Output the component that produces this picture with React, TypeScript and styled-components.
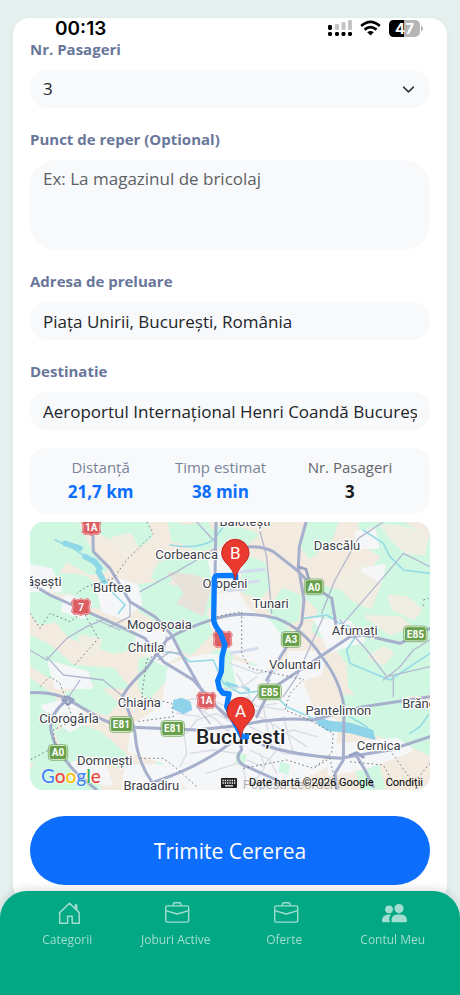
import React from "react";
import styled, { createGlobalStyle } from "styled-components";

const GlobalStyle = createGlobalStyle`
  *, *::before, *::after { box-sizing: border-box; }
  html { background: #e6f1ef; }
  body { margin: 0; background: #e6f1ef; color: #212529; font-family: "Open Sans", "Noto Sans", sans-serif; }
  button, input, select, textarea { font-family: inherit; }
`;

const Page = styled.div`
  min-height: 100vh;
  padding: 18px 13px 93px;
`;

const Card = styled.main`
  padding: 0 17px 17px;
  border-radius: 17px;
  background: #fff;
  box-shadow: 0 2px 10px rgba(0, 40, 40, 0.05);
`;

const StatusBar = styled.header`
  display: flex;
  align-items: flex-start;
  justify-content: space-between;
  height: 20px;
  padding: 1px 7px 0 25px;
`;

const Clock = styled.time`
  font: 600 19px/20px Inter, sans-serif;
  color: #000;
`;

const StatusIcons = styled.div`
  display: flex;
  align-items: center;
  gap: 8px;
`;

const Form = styled.form`
  display: flex;
  flex-direction: column;
`;

const Field = styled.div`
  display: flex;
  flex-direction: column;
  gap: 10px;
  margin-bottom: 20px;
`;

const Label = styled.label`
  font-size: 15px;
  line-height: 22px;
  font-weight: 700;
  color: #68769a;
`;

const controlStyle = `
  display: block;
  width: 100%;
  margin: 0;
  border: 0;
  outline: 0;
  border-radius: 17px;
  background: #f8f9fb;
  color: #212529;
  font-size: 17px;
  line-height: 26px;
  padding: 6px 13px;
`;

const TextInput = styled.input`
  ${controlStyle}
  height: 38px;
`;

const TextArea = styled.textarea`
  ${controlStyle}
  height: 90px;
  border-radius: 26px;
  resize: none;
  &::placeholder { color: #5c6064; opacity: 1; }
`;

const SelectBox = styled.div`
  position: relative;
  svg { position: absolute; right: 15px; top: 13px; pointer-events: none; }
`;

const Select = styled.select`
  ${controlStyle}
  height: 38px;
  appearance: none;
`;

const Summary = styled.dl`
  display: flex;
  justify-content: space-around;
  margin: -2px 0 8px;
  padding: 7px 17px 9px;
  border-radius: 17px;
  background: #f8f9fa;
  text-align: center;
`;

const Term = styled.dt<{ $muted?: boolean }>`
  font-size: 15px;
  line-height: 24px;
  color: ${(p) => (p.$muted ? "#7a849c" : "#62666c")};
`;

const Value = styled.dd<{ $accent?: boolean }>`
  margin: 0;
  font-size: 17px;
  line-height: 26px;
  font-weight: 700;
  color: ${(p) => (p.$accent ? "#0d6efd" : "#16181b")};
`;

const MapFrame = styled.section`
  position: relative;
  overflow: hidden;
  border-radius: 14px;
  background: #f3efe9;
  > svg { display: block; width: 100%; height: auto; }
`;

const MapFooter = styled.div`
  position: absolute;
  left: 11px;
  right: 7px;
  bottom: 0;
  display: flex;
  align-items: flex-end;
  justify-content: space-between;
`;

const Logo = styled.span`
  font: 500 19px/28px Lato, sans-serif;
  text-shadow: 0 0 2px #fff, 0 0 2px #fff;
`;

const Letter = styled.span<{ $c: string }>`
  color: ${(p) => p.$c};
`;

const Credits = styled.div`
  display: flex;
  align-items: center;
  gap: 12px;
  height: 14px;
  font: 11px/14px Roboto, sans-serif;
  color: #000;
  a { color: inherit; text-decoration: none; }
`;

const Submit = styled.button`
  height: 69px;
  margin-top: 26px;
  border: 0;
  border-radius: 35px;
  background: #0d6efd;
  color: #fff;
  font-size: 21px;
  line-height: 32px;
`;

const TabBar = styled.nav`
  position: fixed;
  left: 0;
  right: 0;
  bottom: 0;
  display: flex;
  height: 104px;
  padding: 10px 13px 0;
  border-radius: 27px 27px 0 0;
  background: #02a884;
  box-shadow: 0 -2px 10px rgba(0, 0, 0, 0.13);
`;

const Tab = styled.a`
  flex: 1;
  display: flex;
  flex-direction: column;
  align-items: center;
  gap: 5px;
  color: #a1ddd0;
  font-size: 12px;
  line-height: 18px;
  text-decoration: none;
  svg { margin-left: 4px; }
`;

const HouseIcon = () => (
  <svg width="25" height="25" viewBox="1 0 25 25" fill="none" stroke="currentColor" strokeWidth="1.5" strokeLinejoin="round" aria-hidden="true">
    <path d="M3.7 22.2V11.6L13.500 2.200l9.700 9.400v10.600h-7v-7h-4.600v7z" />
    <path d="M18.6 3.2h2.8v6.800l-2.800-2.800z" fill="currentColor" stroke="none" />
  </svg>
);

const BriefcaseIcon = () => (
  <svg width="25" height="25" viewBox="1 0 25 25" fill="none" stroke="currentColor" strokeWidth="1.4" strokeLinejoin="round" aria-hidden="true">
    <rect x="1.7" y="4.9" width="23" height="16.2" rx="1.6" />
    <path d="M9.4 4.9V3.2q0-1.4 1.4-1.4h4.8q1.4 0 1.4 1.4v1.7M1.7 9.6l11.5 3.4 11.5-3.4" />
  </svg>
);

const PeopleIcon = () => (
  <svg width="25" height="25" viewBox="0 0 25 25" fill="currentColor" aria-hidden="true">
    <circle cx="17" cy="7.6" r="4.6" />
    <circle cx="7" cy="8.3" r="3.9" />
    <path d="M10.9 21.3q-1.5 0-1.5-1.7 0-6.3 7.8-6.3t7.8 6.3q0 1.7-1.5 1.7zM8 21.3H1.4Q0 21.3 0 19.8c0-4.6 3.4-7 9.2-6.2Q6.400 16.300 7.600 20z" />
  </svg>
);

const SignalIcon = () => (
  <svg width="24" height="18" viewBox="0 0 24 18" aria-hidden="true">
    <g fill="#c4c4c4">
      <rect x="7" y="5" width="4" height="6" rx="1" />
      <rect x="13.500" y="3" width="4" height="8" rx="1" />
      <rect x="20" y="1" width="4" height="10" rx="1" />
    </g>
    <rect x="0" y="6" width="4" height="5" rx="1.400" />
    {[0, 7, 13.5, 20].map((x) => (
      <rect key={x} x={x} y="13" width="4" height="4" rx="1.400" />
    ))}
  </svg>
);

const WifiIcon = () => (
  <svg width="21" height="16" viewBox="0 0 21 16" fill="none" stroke="#000" strokeWidth="2.700" aria-hidden="true">
    <path d="M1.200 6Q10.500-2.300 19.800 6M4.500 9.600q6-5 12 0" />
    <path d="M7.200 12.200q3.300-2.600 6.600 0l-3.300 3.400z" fill="#000" stroke="none" />
  </svg>
);

const BatteryIcon = () => (
  <svg width="34" height="17" viewBox="0 0 34 17" aria-hidden="true">
    <rect x="0" y="0" width="31" height="17" rx="5" fill="#b5b5b5" />
    <path d="M15 0H5Q0 0 0 5v7q0 5 5 5h10z" />
    <path d="M32 5.500q2 .6 2 3t-2 3z" fill="#b5b5b5" />
    <text x="15.500" y="14" textAnchor="middle" fontFamily="Inter, sans-serif" fontWeight="700" fontSize="15" fill="#fff">47</text>
  </svg>
);

const greens = [
  "M0 6H140L168 70 190 110 225 150 180 160 110 118 85 150 60 190 30 195 0 170z",
  "M210 6H350L362 50 330 75 300 40 250 55 205 35z",
  "M90 165L160 170 200 200 230 265 180 255 120 215 80 215z",
  "M0 205L60 225 130 265 190 285 260 315 315 350 300 385 250 395 180 370 120 350 80 300 30 310 0 270z",
  "M420 10L470 20 530 10 550 40 545 80 500 90 470 70 430 60z",
  "M460 110L550 118 548 175 500 160 440 160 400 200 370 170 390 130z",
  "M300 200L400 190 430 240 530 290 540 340 480 400 420 370 400 310 330 270z",
  "M385 195L450 205 470 260 540 260 545 220 520 290 430 270z",
  "M560 20L640 30 680 45 650 70 600 45 560 80z",
  "M570 275L630 280 640 350 600 340z M640 330L740 290 780 340 740 370 660 390z",
  "M990 6H1110L1200 60V520L1100 525 1060 560 1000 540 960 500 955 430 920 380 850 330 870 270 830 230 850 195 920 215 1000 180 1060 110 1000 70z",
  "M830 6H920L900 60 840 110 820 85z",
  "M640 110L700 130 715 200 690 230 640 215z",
  "M760 210L810 230 800 300 760 310 720 270z",
  "M0 350L60 380 130 440 250 450 290 500 220 500 160 470 60 470 0 430z",
  "M0 480L70 530 90 590 60 650 80 710 40 740 0 720z",
  "M110 520L200 500 260 550 230 580 160 560z",
  "M80 640L130 610 210 640 290 710 270 740 180 700 120 720z",
  "M940 530L1110 530 1200 570V700L1110 660 1030 640 940 600z",
  "M330 420L400 410 420 460 350 540 330 500z",
  "M550 400L600 390 620 500 590 520 560 460z",
  "M660 410L690 400 700 460 670 470z",
  "M20 730L100 700 180 760 210 810H0V760z",
  "M380 710L440 705 470 760 430 790 390 760z",
  "M970 710L1040 730 1060 800 1000 810z",
  "M620 700L655 710 640 740 615 730z M750 725L780 735 775 765 745 755z",
];

const sands = [
  "M1060 20Q1120 15 1190 50L1180 100 1130 95 1090 60z",
  "M920 190L1000 130 1050 190 1020 260 970 240z",
  "M1080 230L1130 235 1170 270 1150 295 1090 265z",
  "M1010 290L1110 295 1140 320 1080 340z",
  "M1020 410L1060 385 1085 400 1060 430z",
  "M150 350L210 360 200 400 160 390z",
  "M250 55L300 45 320 80 290 110z",
];

const urban = [
  "M420 440Q520 400 560 410L650 440 720 450 810 480 840 560 920 610 910 690 880 740 780 790 640 810 480 810 420 730 300 690 310 620 400 560z",
  "M560 230L620 220 650 270 720 310 770 380 710 440 600 390 545 310z",
  "M260 180L320 200 330 250 280 290 220 270 210 220z",
  "M320 340L420 340 450 400 400 430 330 390z",
  "M600 80L640 100 620 190 560 210 540 120z",
  "M860 300L960 310 1000 360 900 390z",
  "M780 400L880 400 870 460 740 500z",
  "M980 40L1030 30 1040 80 990 80z M1000 150L1060 140 1050 180z",
  "M60 430L170 460 180 500 80 500z M40 560L120 540 170 600 120 630z",
  "M290 740L440 740 450 810 280 810z M130 730L220 730 240 790 130 770z",
  "M900 680L1100 660 1140 690 1010 740 900 760z",
  "M0 140L60 150 90 210 0 210z M110 230L180 250 160 290 100 270z",
];

const highways = [
  "M188 6L190 95 240 145 300 245 375 290 425 345 455 405 520 520 590 590",
  "M0 190L60 225 160 270 250 310 345 355 400 425 490 480 560 560 600 595",
  "M558 6L555 170 552 300",
  "M828 6L808 80 805 140 822 240 815 310 745 420 710 480",
  "M655 80Q700 80 730 95L800 150 850 200 905 235 918 315",
  "M278 530Q290 500 350 445L410 360Q460 325 560 295 640 270 740 295 820 325 875 410 930 480 942 560L940 720 915 760 920 810",
  "M278 530Q305 590 315 640 320 720 365 785L375 810",
  "M0 518Q80 515 125 545L220 600 270 620 500 630 640 615Q740 590 850 600L1000 560 1200 530",
  "M110 540Q50 590 65 640 75 690 140 760L200 810",
  "M1200 325L1110 370 1000 345 960 350 870 410 720 510 680 590",
  "M375 785Q510 740 600 670",
  "M630 660L635 690Q610 715 640 735L740 780",
  "M700 675Q790 705 930 715L1080 690 1200 650",
  "M975 700L1005 750 1030 800",
];

const roads = [
  "M555 85L500 120 440 155 330 215",
  "M0 390L50 420 110 355 170 320 230 295",
  "M50 410L100 465 220 480 280 530",
  "M690 35L710 110 725 280",
  "M880 290L800 470 760 530 M875 280L915 180 985 55 1060 6",
  "M940 310L1070 160 1120 100 1200 140",
  "M930 300L1010 390 1070 470 1200 440",
  "M1060 480L1110 440 1150 390 1200 360",
  "M1090 470L1090 530",
  "M110 540L150 480 M300 240L300 290 240 320",
  "M455 405L420 395 385 420 M410 350L400 400",
  "M640 590L670 540 720 480 M500 560L540 610",
  "M500 6L550 60 M200 300L270 330",
];

const streets = [
  "M470 640L500 600 560 580 610 610 580 655 M500 560L560 600 600 640 M520 530L590 560 650 550 690 580",
  "M640 600L700 560 760 570 M660 620L720 650 790 630 860 650 M670 580L740 620 830 680",
  "M650 530L680 560 740 550 M690 650L760 700 820 705 M660 690L720 720 740 760",
  "M480 700L550 690 620 700 M500 730L570 690 M530 760L620 730 690 760",
  "M620 460L660 530 630 590 M720 600L750 680 M760 590L790 700 M700 560L715 640",
  "M470 540L540 530 M440 580L510 590 M460 620L470 700 450 740",
  "M640 740L650 800 M690 700L705 740 670 790 M740 690L700 740 650 720",
  "M560 510L640 500 680 470 M600 430L680 460 740 450",
];

const borders = [
  "M350 6L370 40 290 120 250 175 170 200 140 220",
  "M0 280L30 325 60 280 120 305 160 275 205 355 130 440",
  "M560 290L635 275 635 400 660 445 820 478 780 520 765 570 840 600 910 640 905 700 850 745",
  "M400 390L350 420 335 530 425 550 430 590 320 605",
  "M30 500L60 470 90 490 130 600 70 630 75 680 0 720",
  "M330 715L400 715 440 745 500 800",
  "M640 745L770 720 850 745 900 715 920 810",
  "M960 725L1060 735 1090 790 M1080 690L1150 790 1200 730",
  "M1180 240L1195 235M1178 255L1190 260",
];

const waterLines = [
  "M75 60L130 85 180 120 215 160 240 210 285 255 265 280",
  "M420 75Q500 90 550 60L580 20",
  "M390 395L450 400 480 425 550 420 580 490 630 520 720 510 770 560 860 600 1035 655 1010 620 960 590",
  "M1000 30L1060 70 1080 110 1120 150 1200 160",
  "M820 295L890 285 930 310 990 330 950 390 960 430 1030 460 1080 480 1200 400",
  "M1195 585L1170 620 1140 640",
];

type MapLabel = [string, number, number];
const towns: MapLabel[] = [
  ["Balotești", 645, 18], ["Corbeanca", 470, 116], ["Dascălu", 921, 90], ["ășești", 43, 199],
  ["Buftea", 246, 215], ["Otopeni", 585, 203], ["Tunari", 722, 263], ["Mogoșoaia", 388, 328],
  ["Afumați", 974, 346], ["Chitila", 348, 395], ["Voluntari", 795, 446], ["Chiajna", 328, 560],
  ["Pantelimon", 925, 586], ["Brănești", 1188, 563], ["Ciorogârla", 117, 608], ["Cernica", 1046, 689],
  ["Domnești", 224, 734], ["Bragadiru", 364, 810],
];

const shields: MapLabel[] = [
  ["A0", 852, 201], ["A3", 783, 359], ["E85", 1156, 342], ["E85", 719, 516],
  ["E81", 274, 614], ["E81", 428, 626], ["A0", 84, 698],
];

const redShields: MapLabel[] = [["1A", 184, 20], ["7", 153, 260], ["", 578, 358], ["1A", 529, 541]];

const Pin = ({ letter, x, y }: { letter: string; x: number; y: number }) => (
  <g transform={`translate(${x} ${y})`}>
    <path d="M0 0C-5-45-41-49-41-81A41 41 0 0 1 41-81C41-49 5-45 0 0z" fill="#ea3a30" stroke="#c5221f" strokeWidth="3" />
    <text y="-62" textAnchor="middle" fontFamily="Roboto, sans-serif" fontSize="51" fill="#fff">{letter}</text>
  </g>
);

const RouteMap = () => (
  <svg viewBox="0 6 1200 804" role="img" aria-label="Traseu">
    <rect y="6" width="1200" height="804" fill="#f3ebe0" />
    <g strokeLinejoin="round">
      <path d={greens.join("")} fill="#cff7e1" stroke="#cff7e1" strokeWidth="12" />
      <path d={sands.join("")} fill="#f0eee2" stroke="#f0eee2" strokeWidth="12" />
      <path d="M410 155L500 165 545 200 520 290 440 250 460 220z" fill="#e7e2da" />
      <path d={urban.join("")} fill="#f5f6f8" stroke="#f5f6f8" strokeWidth="14" />
      <path d="M575 400L600 390 620 510 590 520 570 480z M620 695L650 705 640 740 615 730z M750 725L780 735 775 765 745 755z" fill="#cff7e1" />
    </g>
    <g fill="none" stroke="#d4dbee" strokeWidth="9">
      <path d="M610 158L705 148M590 193L690 183M590 212L650 206M600 400L685 385" />
    </g>
    <g fill="none" strokeLinejoin="round" strokeLinecap="round">
      <path d={waterLines.join("")} stroke="#97dbe6" strokeWidth="5" />
      <path d="M105 70L150 85M165 110L195 125 210 145M205 155L225 190" stroke="#8fd8e8" strokeWidth="17" />
      <path d="M590 490L620 500M640 500L655 510M700 505L720 515" stroke="#8fd8e8" strokeWidth="10" />
      <path d={streets.join("")} stroke="#d9dce6" strokeWidth="4" />
    </g>
    <path d="M430 540L455 533 482 545 487 570 460 583 427 566zM855 588L900 602 960 608 1030 630 1035 660 960 640 890 632 860 610z" fill="#8fd3ea" />
    <g fill="none" strokeLinejoin="round" strokeLinecap="round">
      <path d={roads.join("")} stroke="#b3b9d0" strokeWidth="4" />
      <path d={highways.join("")} stroke="#a6afcb" strokeWidth="9" />
      <path d="M98 540L112 530 130 540 114 554zM805 140L828 148 840 190M960 706L980 698 1000 712" stroke="#98a2c3" strokeWidth="8" />
      <path d={borders.join("")} stroke="#777b82" strokeWidth="3" strokeDasharray="5 8" strokeLinecap="butt" />
    </g>
    <g fontFamily="Roboto, sans-serif" fontSize="39" textAnchor="middle" fill="#3c4048" stroke="#fff" strokeWidth="7" strokeLinejoin="round" paintOrder="stroke">
      {towns.map(([name, x, y]) => (
        <text key={name} x={x} y={y}>{name}</text>
      ))}
      <text x="632" y="672" fontSize="63" fontWeight="500" fill="#202124">București</text>
      <text x="785" y="808" opacity="0.35">Popești-Leordeni</text>
    </g>
    <g fontFamily="Roboto, sans-serif" fontSize="30" fontWeight="700" textAnchor="middle" fill="#fff">
      {shields.map(([name, x, y]) => {
        const w = name.length > 2 ? 66 : 54;
        return (
          <g key={`${name}-${x}`}>
            <rect x={x - w / 2} y={y - 22} width={w} height="43" rx="8" fill="#689f4a" stroke="#f3fbef" strokeWidth="3" />
            <rect x={x - w / 2 - 2} y={y - 24} width={w + 4} height="47" rx="10" fill="none" stroke="#5f9543" strokeWidth="2" />
            <text x={x} y={y + 11}>{name}</text>
          </g>
        );
      })}
      {redShields.map(([name, x, y]) => (
        <g key={`${name}-${x}`}>
          <path transform={`translate(${x} ${y})`} d="M-20-23Q-10-17 0-23 10-17 20-23L27-14Q21 0 26 15L18 22Q8 20 0 25-8 20-18 22L-26 15Q-21 0-27-14z" fill="#dc5d62" stroke="#dc5d62" strokeWidth="6" strokeLinejoin="round" />
          <path transform={`translate(${x} ${y})`} d="M-20-23Q-10-17 0-23 10-17 20-23L27-14Q21 0 26 15L18 22Q8 20 0 25-8 20-18 22L-26 15Q-21 0-27-14z" fill="none" stroke="#fbdcdc" strokeWidth="2" />
          <text x={x} y={y + 12}>{name}</text>
        </g>
      ))}
    </g>
    <path d="M617 180V166L562 167Q554 168 553 178L551 300Q554 318 570 336L585 375 576 410 574 455 563 482 568 505 578 519 597 522 590 560 610 600 636 650 657 650" fill="none" stroke="#087cff" strokeWidth="16" strokeLinejoin="round" />
    <Pin letter="B" x={616} y={180} />
    <Pin letter="A" x={632} y={654} />
  </svg>
);

const KeyboardIcon = () => (
  <svg width="16" height="10" viewBox="0 0 16 10" aria-hidden="true">
    <rect width="16" height="10" rx="1" fill="#222" />
    <path d="M1.500 2.500h13M1.500 5h13" stroke="#fff" strokeWidth="1.300" strokeDasharray="1.300 1" />
    <path d="M4 7.800h8" stroke="#fff" strokeWidth="1.200" />
  </svg>
);

const logoLetters = [
  ["G", "#4285f4"], ["o", "#ea4335"], ["o", "#fbbc05"], ["g", "#4285f4"], ["l", "#34a853"], ["e", "#ea4335"],
];

const tabs = [
  { name: "Categorii", Icon: HouseIcon },
  { name: "Joburi Active", Icon: BriefcaseIcon },
  { name: "Oferte", Icon: BriefcaseIcon },
  { name: "Contul Meu", Icon: PeopleIcon },
];

export default function App() {
  return (
    <>
      <GlobalStyle />
      <Page>
        <Card>
          <StatusBar>
            <Clock>00:13</Clock>
            <StatusIcons>
              <SignalIcon />
              <WifiIcon />
              <BatteryIcon />
            </StatusIcons>
          </StatusBar>
          <Form onSubmit={(e) => e.preventDefault()}>
            <Field>
              <Label htmlFor="passengers">Nr. Pasageri</Label>
              <SelectBox>
                <Select id="passengers" defaultValue="3">
                  {[1, 2, 3, 4].map((n) => (
                    <option key={n} value={n}>{n}</option>
                  ))}
                </Select>
                <svg width="13" height="13" viewBox="0 0 16 16" fill="none" stroke="#343a40" strokeWidth="2" strokeLinecap="round" strokeLinejoin="round" aria-hidden="true">
                  <path d="m2 5 6 6 6-6" />
                </svg>
              </SelectBox>
            </Field>
            <Field>
              <Label htmlFor="landmark">Punct de reper (Optional)</Label>
              <TextArea id="landmark" placeholder="Ex: La magazinul de bricolaj" />
            </Field>
            <Field>
              <Label htmlFor="pickup">Adresa de preluare</Label>
              <TextInput id="pickup" defaultValue="Piața Unirii, București, România" />
            </Field>
            <Field>
              <Label htmlFor="destination">Destinatie</Label>
              <TextInput id="destination" defaultValue="Aeroportul Internațional Henri Coandă București" />
            </Field>
            <Summary>
              <div>
                <Term $muted>Distanță</Term>
                <Value $accent>21,7 km</Value>
              </div>
              <div>
                <Term $muted>Timp estimat</Term>
                <Value $accent>38 min</Value>
              </div>
              <div>
                <Term>Nr. Pasageri</Term>
                <Value>3</Value>
              </div>
            </Summary>
            <MapFrame>
              <RouteMap />
              <MapFooter>
                <Logo>
                  {logoLetters.map(([ch, color], i) => (
                    <Letter key={i} $c={color}>{ch}</Letter>
                  ))}
                </Logo>
                <Credits>
                  <KeyboardIcon />
                  <span>Date hartă ©2026 Google</span>
                  <a href="#terms">Condiții</a>
                </Credits>
              </MapFooter>
            </MapFrame>
            <Submit type="submit">Trimite Cererea</Submit>
          </Form>
        </Card>
      </Page>
      <TabBar>
        {tabs.map(({ name, Icon }) => (
          <Tab key={name} href={`#${name.toLowerCase().replace(" ", "-")}`}>
            <Icon />
            <span>{name}</span>
          </Tab>
        ))}
      </TabBar>
    </>
  );
}
